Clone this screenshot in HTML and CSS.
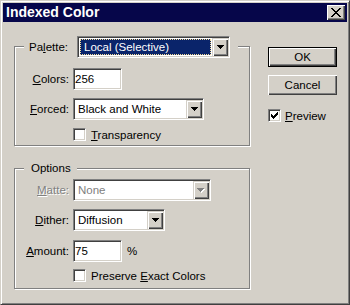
FILE: index.html
```html
<!DOCTYPE html>
<html>
<head>
<meta charset="utf-8">
<title>Indexed Color</title>
<link rel="stylesheet" href="styles.css">
</head>
<body>
<div class="window">
  <div class="titlebar">
    <span class="title">Indexed Color</span>
    <div class="close">
      <svg width="10" height="9" viewBox="0 0 10 9"><path fill="#000" d="M0 0h2v1h-2z M8 0h2v1h-2z M1 1h2v1h-2z M7 1h2v1h-2z M2 2h2v1h-2z M6 2h2v1h-2z M3 3h4v1h-4z M4 4h2v1h-2z M3 5h4v1h-4z M2 6h2v1h-2z M6 6h2v1h-2z M1 7h2v1h-2z M7 7h2v1h-2z M0 8h2v1h-2z M8 8h2v1h-2z"/></svg>
    </div>
  </div>
  <div class="client">
    <div class="left">
      <div class="group g-palette">
        <div class="legend legend-palette">
          <span class="legend-label">Pa<u>l</u>ette:</span>
          <div class="combo w-palette">
            <div class="field"><span class="sel">Local (Selective)</span></div>
            <div class="arrow-btn"><svg width="7" height="4" viewBox="0 0 7 4"><path fill="#000" d="M0 0h7v1h-7z M1 1h5v1h-5z M2 2h3v1h-3z M3 3h1v1h-1z"/></svg></div>
          </div>
        </div>
        <div class="row r-colors">
          <span class="lbl"><u>C</u>olors:</span>
          <div class="edit">256</div>
        </div>
        <div class="row r-forced">
          <span class="lbl"><u>F</u>orced:</span>
          <div class="combo w-forced">
            <div class="field"><span class="txt">Black and White</span></div>
            <div class="arrow-btn"><svg width="7" height="4" viewBox="0 0 7 4"><path fill="#000" d="M0 0h7v1h-7z M1 1h5v1h-5z M2 2h3v1h-3z M3 3h1v1h-1z"/></svg></div>
          </div>
        </div>
        <div class="checkrow c-transparency">
          <div class="cb"></div>
          <span class="cb-label"><u>T</u>ransparency</span>
        </div>
      </div>

      <div class="group g-options">
        <div class="legend legend-options">Options</div>
        <div class="row r-matte">
          <span class="lbl disabled"><u>M</u>atte:</span>
          <div class="combo w-matte">
            <div class="field"><span class="txt disabled-txt">None</span></div>
            <div class="arrow-btn"><svg width="8" height="5" viewBox="0 0 8 5"><path fill="#fff" d="M1 1h7v1h-7z M2 2h5v1h-5z M3 3h3v1h-3z M4 4h1v1h-1z"/><path fill="#808080" d="M0 0h7v1h-7z M1 1h5v1h-5z M2 2h3v1h-3z M3 3h1v1h-1z"/></svg></div>
          </div>
        </div>
        <div class="row r-dither">
          <span class="lbl"><u>D</u>ither:</span>
          <div class="combo w-dither">
            <div class="field"><span class="txt">Diffusion</span></div>
            <div class="arrow-btn"><svg width="7" height="4" viewBox="0 0 7 4"><path fill="#000" d="M0 0h7v1h-7z M1 1h5v1h-5z M2 2h3v1h-3z M3 3h1v1h-1z"/></svg></div>
          </div>
        </div>
        <div class="row r-amount">
          <span class="lbl"><u>A</u>mount:</span>
          <div class="edit">75</div>
          <span class="pct">%</span>
        </div>
        <div class="checkrow c-preserve">
          <div class="cb"></div>
          <span class="cb-label">Preserve <u>E</u>xact Colors</span>
        </div>
      </div>
    </div>

    <div class="right">
      <div class="btn btn-default">OK</div>
      <div class="btn btn-cancel">Cancel</div>
      <div class="preview-row">
        <div class="cb"><svg width="11" height="11" viewBox="0 0 11 11"><path fill="#000" d="M8 2h1v1h-1z M7 3h2v1h-2z M2 4h1v1h-1z M6 4h3v1h-3z M2 5h2v1h-2z M5 5h3v1h-3z M2 6h5v1h-5z M3 7h3v1h-3z M4 8h1v1h-1z"/></svg></div>
        <span class="cb-label"><u>P</u>review</span>
      </div>
    </div>
  </div>
</div>
</body>
</html>
```
FILE: styles.css
```css
html, body {
  margin: 0;
  padding: 0;
  background: #d4d0c8;
}

.window {
  width: 350px;
  height: 305px;
  box-sizing: border-box;
  border: 1px solid;
  border-color: #d4d0c8 #404040 #404040 #d4d0c8;
  box-shadow: inset 1px 1px #ffffff, inset -1px -1px #808080;
  padding: 2px;
  background: #d4d0c8;
  font-family: "Liberation Sans", Arial, sans-serif;
  font-size: 11.5px;
  color: #000;
  overflow: hidden;
}

u {
  text-decoration: underline;
  text-underline-offset: 1px;
  text-decoration-thickness: 1px;
}

.titlebar {
  height: 19px;
  background: #06064a;
  display: flex;
  align-items: center;
  justify-content: space-between;
  padding: 0 2px 0 3px;
}

.title {
  color: #fff;
  font-weight: bold;
  font-size: 14px;
  line-height: 19px;
}

.close {
  width: 18px;
  height: 15px;
  box-sizing: border-box;
  background: #d4d0c8;
  box-shadow: inset 1px 1px #ffffff, inset -1px -1px #404040, inset -2px -2px #808080;
  display: flex;
  align-items: center;
  justify-content: center;
}

.close svg { display: block; }

.client {
  display: flex;
  padding: 24px 0 0 11px;
}

.left {
  display: flex;
  flex-direction: column;
  gap: 22px;
}

.group {
  width: 236px;
  box-sizing: border-box;
  border: 1px solid #808080;
  box-shadow: inset 1px 1px #ffffff, 1px 1px #ffffff;
  display: flex;
  flex-direction: column;
}

.g-palette { padding-bottom: 4px; }
.g-options { padding-bottom: 6px; }

.legend {
  align-self: flex-start;
  display: flex;
  align-items: center;
  background: #d4d0c8;
  margin-left: 9px;
}

.legend-palette {
  margin-top: -11px;
  height: 22px;
  padding: 0 8px 0 5px;
}

.legend-label {
  width: 48px;
}

.legend-options {
  margin-top: -8px;
  height: 14px;
  padding: 0 6px 0 7px;
}

.row {
  display: flex;
  align-items: center;
  height: 22px;
}

.lbl {
  width: 58px;
  box-sizing: border-box;
  text-align: right;
  padding-right: 4px;
  flex: none;
}

.disabled {
  color: #808080;
  text-shadow: 1px 1px #ffffff;
}

.disabled-txt {
  color: #808080;
}

.r-colors { margin-top: 10px; }
.r-forced { margin-top: 8px; }
.c-transparency { margin-top: 8px; }

.r-matte { margin-top: 4px; }
.r-dither { margin-top: 8px; }
.r-amount { margin-top: 9px; }
.c-preserve { margin-top: 7px; }

.checkrow {
  display: flex;
  align-items: center;
  height: 13px;
  padding-left: 58px;
}

.cb {
  width: 13px;
  height: 13px;
  box-sizing: border-box;
  border: 1px solid;
  border-color: #808080 #ffffff #ffffff #808080;
  box-shadow: inset 1px 1px #404040, inset -1px -1px #d4d0c8;
  background: #fff;
  flex: none;
}

.cb svg { display: block; }

.cb-label {
  margin-left: 5px;
  white-space: nowrap;
}

.sunken {
}

.edit,
.combo {
  height: 22px;
  box-sizing: border-box;
  border: 1px solid;
  border-color: #808080 #ffffff #ffffff #808080;
  box-shadow: inset 1px 1px #404040, inset -1px -1px #d4d0c8;
  background: #fff;
  padding: 1px;
  flex: none;
}

.edit {
  width: 49px;
  line-height: 18px;
}

.pct {
  margin-left: 5px;
}

.combo {
  display: flex;
}

.w-palette { width: 153px; }
.w-forced { width: 131px; }
.w-matte { width: 138px; }
.w-dither { width: 92px; }

.field {
  flex: 1;
  display: flex;
  align-items: center;
  min-width: 0;
}

.txt {
  padding-left: 3px;
  white-space: nowrap;
}

.sel {
  flex: 1;
  margin: 1px;
  height: 16px;
  box-sizing: border-box;
  background: #0a246a;
  color: #fff;
  border: 1px dotted #f5db95;
  padding-left: 3px;
  line-height: 14px;
  white-space: nowrap;
}

.arrow-btn {
  width: 16px;
  height: 18px;
  box-sizing: border-box;
  background: #d4d0c8;
  box-shadow: inset 1px 1px #d4d0c8, inset 2px 2px #ffffff, inset -1px -1px #404040, inset -2px -2px #808080;
  display: flex;
  align-items: center;
  justify-content: center;
  flex: none;
}

.arrow-btn svg { display: block; }

.right {
  margin-left: 18px;
  padding-top: 1px;
  display: flex;
  flex-direction: column;
}

.btn {
  width: 69px;
  height: 20px;
  box-sizing: border-box;
  display: flex;
  align-items: center;
  justify-content: center;
  background: #d4d0c8;
}

.btn-default {
  border: 1px solid #000;
  box-shadow: inset 1px 1px #ffffff, inset -1px -1px #404040, inset -2px -2px #808080;
}

.btn-cancel {
  margin-top: 8px;
  box-shadow: inset 1px 1px #ffffff, inset -1px -1px #404040, inset -2px -2px #808080;
}

.preview-row {
  margin-top: 14px;
  display: flex;
  align-items: center;
}

.preview-row .cb-label {
  margin-left: 4px;
}
```
